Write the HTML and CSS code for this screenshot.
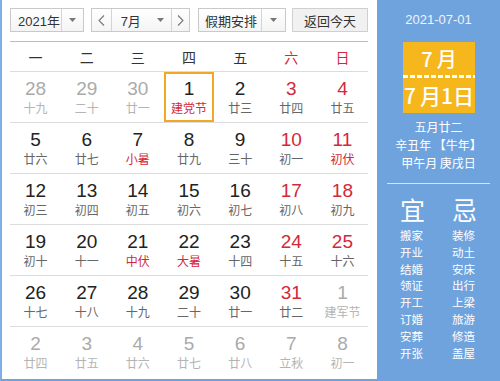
FILE: index.html
```html
<!DOCTYPE html>
<html lang="zh-CN">
<head>
<meta charset="UTF-8">
<title>万年历</title>
<link rel="stylesheet" href="styles.css">
</head>
<body>
<div class="calendar">
    <div class="main">
        <div class="toolbar">
            <div class="select year">
                <span class="sel-text">2021年</span>
                <span class="sel-arrow"><svg width="7" height="4" viewBox="0 0 7 4"><path d="M0 0h7L3.5 4z" fill="#777"/></svg></span>
            </div>
            <div class="select month">
                <span class="nav"><svg width="7" height="11" viewBox="0 0 7 11"><path d="M6 0.5L1 5.5l5 5" fill="none" stroke="#777" stroke-width="1.1"/></svg></span>
                <span class="sel-text">7月<svg class="tri" width="7" height="4" viewBox="0 0 7 4"><path d="M0 0h7L3.5 4z" fill="#777"/></svg></span>
                <span class="nav"><svg width="7" height="11" viewBox="0 0 7 11"><path d="M1 0.5l5 5-5 5" fill="none" stroke="#777" stroke-width="1.1"/></svg></span>
            </div>
            <div class="select holiday">
                <span class="sel-text">假期安排</span>
                <span class="sel-arrow"><svg width="7" height="4" viewBox="0 0 7 4"><path d="M0 0h7L3.5 4z" fill="#777"/></svg></span>
            </div>
            <button class="today-btn">返回今天</button>
        </div>

        <div class="weekdays">
            <span>一</span><span>二</span><span>三</span><span>四</span><span>五</span>
            <span class="red">六</span><span class="red">日</span>
        </div>

        <div class="weeks" id="weeks"></div>
    </div>

    <div class="side">
        <div class="side-date">2021-07-01</div>
        <div class="tear">
            <div class="tear-month"><span class="digit">7</span>月</div>
            <div class="tear-cut"></div>
            <div class="tear-day"><span class="digit">7</span>月1日</div>
        </div>
        <div class="lunar">
            <div>五月廿二</div>
            <div>辛丑年 【牛年】</div>
            <div>甲午月 庚戌日</div>
        </div>
        <div class="side-line"></div>
        <div class="yiji">
            <div class="yiji-col">
                <div class="yiji-head">宜</div>
                <div>搬家</div><div>开业</div><div>结婚</div><div>领证</div>
                <div>开工</div><div>订婚</div><div>安葬</div><div>开张</div>
            </div>
            <div class="yiji-col">
                <div class="yiji-head">忌</div>
                <div>装修</div><div>动土</div><div>安床</div><div>出行</div>
                <div>上梁</div><div>旅游</div><div>修造</div><div>盖屋</div>
            </div>
        </div>
    </div>
</div>

<script type="text/javascript">
    // day, lunar text, flags: o = other month, r = red number, f = red lunar, t = today
    var weeks = [
        [[28, '十九', 'o'], [29, '二十', 'o'], [30, '廿一', 'o'], [1, '建党节', 'tf'], [2, '廿三', ''], [3, '廿四', 'r'], [4, '廿五', 'r']],
        [[5, '廿六', ''], [6, '廿七', ''], [7, '小暑', 'f'], [8, '廿九', ''], [9, '三十', ''], [10, '初一', 'r'], [11, '初伏', 'rf']],
        [[12, '初三', ''], [13, '初四', ''], [14, '初五', ''], [15, '初六', ''], [16, '初七', ''], [17, '初八', 'r'], [18, '初九', 'r']],
        [[19, '初十', ''], [20, '十一', ''], [21, '中伏', 'f'], [22, '大暑', 'f'], [23, '十四', ''], [24, '十五', 'r'], [25, '十六', 'r']],
        [[26, '十七', ''], [27, '十八', ''], [28, '十九', ''], [29, '二十', ''], [30, '廿一', ''], [31, '廿二', 'r'], [1, '建军节', 'o']],
        [[2, '廿四', 'o'], [3, '廿五', 'o'], [4, '廿六', 'o'], [5, '廿七', 'o'], [6, '廿八', 'o'], [7, '立秋', 'o'], [8, '初一', 'o']]
    ];

    var html = '';
    for (var i = 0; i < weeks.length; i++) {
        html += '<div class="week">';
        for (var j = 0; j < 7; j++) {
            var d = weeks[i][j];
            var cls = 'day';
            if (d[2].indexOf('o') > -1) cls += ' other';
            if (d[2].indexOf('r') > -1) cls += ' holiday-num';
            if (d[2].indexOf('f') > -1) cls += ' festival';
            if (d[2].indexOf('t') > -1) cls += ' today';
            html += '<div class="' + cls + '"><span class="num">' + d[0] + '</span><span class="lun">' + d[1] + '</span></div>';
        }
        html += '</div>';
    }
    document.getElementById('weeks').innerHTML = html;
</script>
</body>
</html>
```

FILE: styles.css
```css
body {
    margin: 0;
    font-family: "Liberation Sans", "Noto Sans CJK SC", sans-serif;
    background-color: #fff;
}
.calendar {
    display: flex;
    width: 500px;
    height: 381px;
}
.main {
    width: 358px;
    padding: 8px 9px 0 8px;
    border-left: 2px solid #7eaee3;
    border-bottom: 2px solid #6fa3de;
}

/* toolbar */
.toolbar {
    display: flex;
    height: 24px;
    padding-bottom: 9px;
    border-bottom: 1px solid #9fc2e8;
}
.select {
    display: flex;
    height: 22px;
    border: 1px solid #c9c9c9;
    background: linear-gradient(#fff, #f4f4f4);
    font-size: 13px;
    color: #333;
    font-family: "Noto Sans CJK SC", sans-serif;
}
.select .sel-text {
    display: flex;
    align-items: center;
    padding-left: 7px;
}
.sel-arrow {
    display: flex;
    align-items: center;
    justify-content: center;
    border-left: 1px solid #d4d4d4;
}
.year { width: 72px; }
.year .sel-text { width: 44px; font-family: "Liberation Sans", "Noto Sans CJK SC", sans-serif; }
.year .sel-arrow { width: 21px; }
.month {
    width: 97px;
    margin-left: 7px;
}
.month .nav {
    display: flex;
    align-items: center;
    justify-content: center;
    width: 21px;
}
.month .nav:first-child { border-right: 1px solid #d4d4d4; }
.month .nav:last-child { border-left: 1px solid #d4d4d4; width: 19px; }
.month .sel-text {
    width: 49px;
    padding-left: 9px;
    justify-content: space-between;
    padding-right: 7px;
    font-family: "Liberation Sans", "Noto Sans CJK SC", sans-serif;
}
.holiday {
    width: 86px;
    margin-left: 8px;
}
.holiday .sel-text { width: 56px; padding-left: 6px; }
.holiday .sel-arrow { width: 23px; }
.today-btn {
    width: 76px;
    height: 24px;
    margin-left: 6px;
    padding: 0;
    border: 1px solid #d0d0d0;
    background: #f1f1f1;
    font-family: "Noto Sans CJK SC", sans-serif;
    font-size: 13px;
    color: #333;
}

/* grid */
.weekdays, .week {
    display: grid;
    grid-template-columns: repeat(7, 1fr);
}
.weekdays {
    height: 29px;
    align-items: center;
    border-bottom: 1px solid #dcdcdc;
    font-family: "Noto Sans CJK SC", sans-serif;
    font-size: 14px;
    color: #333;
    text-align: center;
}
.weekdays .red { color: #d3283a; }
.week {
    height: 50px;
    border-bottom: 1px solid #dcdcdc;
}
.week:last-child { border-bottom: none; }
.day {
    display: flex;
    flex-direction: column;
    align-items: center;
    padding-top: 6px;
    box-sizing: border-box;
}
.day .num {
    font-size: 19px;
    line-height: 21px;
    color: #222;
}
.day .lun {
    font-family: "Noto Sans CJK SC", sans-serif;
    font-size: 12px;
    line-height: 17px;
    color: #666;
}
.day.holiday-num .num { color: #d3283a; }
.day.festival .lun { color: #d3283a; }
.day.other .num { color: #aaa; }
.day.other .lun { color: #b4b4b4; }
.day.today {
    margin: 0 1px 0 1px;
    box-shadow: inset 0 0 0 2px #f1a925;
}

/* right panel */
.side {
    width: 123px;
    background-color: #6fa3de;
    color: #fff;
    text-align: center;
    font-family: "Noto Sans CJK SC", sans-serif;
}
.side-date {
    padding-top: 12px;
    font-family: "Liberation Sans", sans-serif;
    font-size: 13px;
    line-height: 16px;
    color: #eef4fb;
}
.tear {
    width: 72px;
    margin: 14px auto 0 26px;
    background-color: #f6b71c;
}
.tear .digit {
    margin-right: 4px;
}
.tear-month {
    height: 33px;
    line-height: 33px;
    font-size: 20px;
    font-weight: 500;
}
.tear-cut {
    height: 3px;
    background: repeating-linear-gradient(90deg, #fff 0, #fff 5px, transparent 5px, transparent 7px);
}
.tear-day {
    height: 35px;
    line-height: 35px;
    font-size: 21px;
    font-weight: 500;
}
.lunar {
    margin-top: 5px;
    font-size: 12px;
    line-height: 18px;
}
.side-line {
    height: 1px;
    margin: 11px 10px 0 10px;
    background-color: #d3e4f6;
}
.yiji {
    display: flex;
    justify-content: center;
    gap: 27px;
    margin-top: 8px;
    font-size: 11.5px;
    line-height: 16.8px;
}
.yiji-col {
    width: 25px;
    text-align: left;
}
.yiji-head {
    font-size: 25px;
    line-height: 35px;
    text-align: center;
}
```
